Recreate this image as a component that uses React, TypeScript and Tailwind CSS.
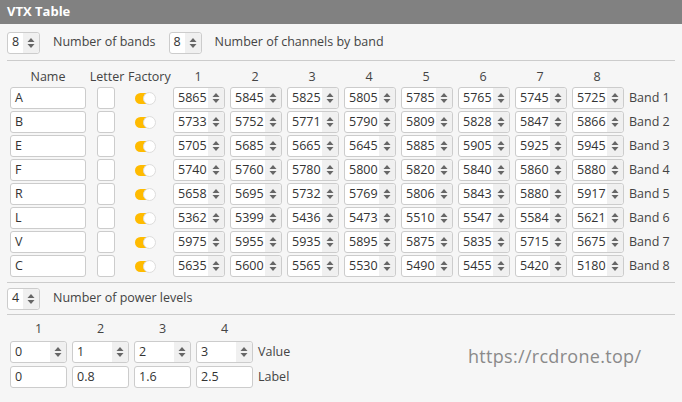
const bands = [
  { name: 'A', ch: [5865, 5845, 5825, 5805, 5785, 5765, 5745, 5725] },
  { name: 'B', ch: [5733, 5752, 5771, 5790, 5809, 5828, 5847, 5866] },
  { name: 'E', ch: [5705, 5685, 5665, 5645, 5885, 5905, 5925, 5945] },
  { name: 'F', ch: [5740, 5760, 5780, 5800, 5820, 5840, 5860, 5880] },
  { name: 'R', ch: [5658, 5695, 5732, 5769, 5806, 5843, 5880, 5917] },
  { name: 'L', ch: [5362, 5399, 5436, 5473, 5510, 5547, 5584, 5621] },
  { name: 'V', ch: [5975, 5955, 5935, 5895, 5875, 5835, 5715, 5675] },
  { name: 'C', ch: [5635, 5600, 5565, 5530, 5490, 5455, 5420, 5180] },
];

function Arrows() {
  return (
    <svg width="8" height="12" viewBox="0 0 8 12" className="shrink-0">
      <path d="M4 1 L7.5 5 H0.5 Z" fill="#666" />
      <path d="M4 11 L7.5 7 H0.5 Z" fill="#666" />
    </svg>
  );
}

function Spin({ value, w }: { value: string | number; w: string }) {
  return (
    <div className={`${w} h-[22px] flex items-center border border-[#ccc] rounded-[3px] bg-white pl-[4px] text-[12.5px] text-[#333]`}>
      <span className="flex-1">{value}</span>
      <div className="h-full w-[16px] flex items-center justify-center bg-[#f0f0f0] rounded-r-[3px]">
        <Arrows />
      </div>
    </div>
  );
}

function Text({ value, w }: { value: string; w: string }) {
  return (
    <div className={`${w} h-[22px] flex items-center border border-[#ccc] rounded-[3px] bg-white pl-[4px] text-[12.5px] text-[#333]`}>
      {value}
    </div>
  );
}

function Toggle() {
  return (
    <div className="w-[20px] h-[11px] rounded-full bg-[#ffbb00] relative">
      <div className="absolute right-[-1px] top-[-1px] w-[13px] h-[13px] rounded-full bg-white border border-[#ddd]" />
    </div>
  );
}

export default function App() {
  return (
    <div className="w-[682px] h-[402px] bg-[#f6f6f6] overflow-hidden relative" style={{ fontFamily: '"Open Sans", sans-serif' }}>
      <div className="h-[24px] bg-[#818181] text-white font-bold text-[13px] pl-[7px] flex items-center">VTX Table</div>

      <div className="flex items-center h-[35px] px-[7px] mt-[1px] text-[12.5px] text-[#444]">
        <Spin value="8" w="w-[33px]" />
        <span className="ml-[13px] mr-[13px]">Number of bands</span>
        <Spin value="8" w="w-[33px]" />
        <span className="ml-[13px]">Number of channels by band</span>
      </div>
      <div className="h-px bg-[#ccc] mx-[7px]" />

      <div className="px-[10px] pt-[7px] text-[12.5px] text-[#444]">
        <div className="flex items-center h-[18px]">
          <div className="w-[76px] text-center">Name</div>
          <div className="w-[42px] text-center">Letter</div>
          <div className="w-[40px] text-center">Factory</div>
          <div className="w-[4px]" />
          {[1, 2, 3, 4, 5, 6, 7, 8].map((n) => (
            <div key={n} className="w-[52px] mr-[5px] text-center">{n}</div>
          ))}
        </div>
        <div className="flex flex-col gap-[2px] mt-[1px]">
          {bands.map((b, i) => (
            <div key={b.name} className="flex items-center h-[22px]">
              <Text value={b.name} w="w-[76px]" />
              <div className="w-[18px] h-[22px] ml-[11px] border border-[#ccc] rounded-[3px] bg-white" />
              <div className="w-[58px] flex justify-center pl-[2px]"><Toggle /></div>
              {b.ch.map((c, j) => (
                <div key={j} className="mr-[5px]"><Spin value={c} w="w-[52px]" /></div>
              ))}
              <span>Band {i + 1}</span>
            </div>
          ))}
        </div>
      </div>

      <div className="h-px bg-[#ccc] mx-[7px] mt-[5px]" />
      <div className="flex items-center h-[31px] px-[7px] text-[12.5px] text-[#444]">
        <Spin value="4" w="w-[33px]" />
        <span className="ml-[13px]">Number of power levels</span>
      </div>
      <div className="h-px bg-[#ccc] mx-[7px]" />

      <div className="px-[10px] pt-[5px] text-[12.5px] text-[#444]">
        <div className="flex h-[18px]">
          {[1, 2, 3, 4].map((n) => (
            <div key={n} className="w-[57px] mr-[5px] text-center">{n}</div>
          ))}
        </div>
        <div className="flex items-center h-[22px] mt-[3px]">
          {['0', '1', '2', '3'].map((v) => (
            <div key={v} className="mr-[5px]"><Spin value={v} w="w-[57px]" /></div>
          ))}
          <span>Value</span>
        </div>
        <div className="flex items-center h-[22px] mt-[3px]">
          {['0', '0.8', '1.6', '2.5'].map((v) => (
            <div key={v} className="mr-[5px]"><Text value={v} w="w-[57px]" /></div>
          ))}
          <span>Label</span>
        </div>
      </div>

      <div className="absolute left-[468px] top-[343px] text-[18px] text-[#8a8a8a] tracking-[0.3px]">https://rcdrone.top/</div>
    </div>
  );
}
